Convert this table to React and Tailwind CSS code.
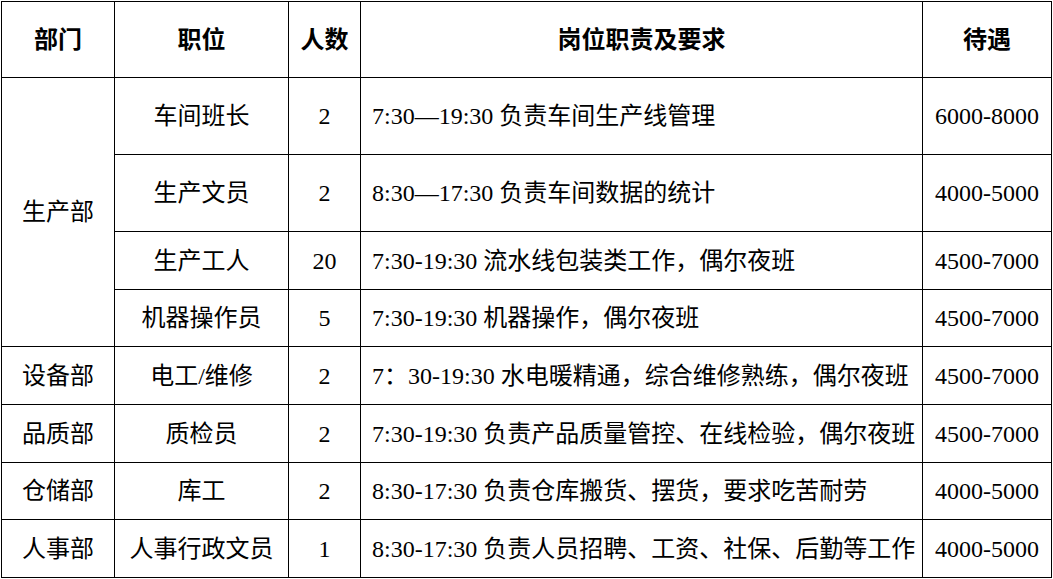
const ROWS = [
    { dept: "生产部", span: 4, job: "车间班长", num: "2", desc: "7:30—19:30 负责车间生产线管理", pay: "6000-8000", h: "h-[77px]" },
    { job: "生产文员", num: "2", desc: "8:30—17:30 负责车间数据的统计", pay: "4000-5000", h: "h-[77px]" },
    { job: "生产工人", num: "20", desc: "7:30-19:30 流水线包装类工作，偶尔夜班", pay: "4500-7000", h: "h-[58px]" },
    { job: "机器操作员", num: "5", desc: "7:30-19:30 机器操作，偶尔夜班", pay: "4500-7000", h: "h-[57px]" },
    { dept: "设备部", span: 1, job: "电工/维修", num: "2", desc: "7：30-19:30 水电暖精通，综合维修熟练，偶尔夜班", pay: "4500-7000", h: "h-[58px]" },
    { dept: "品质部", span: 1, job: "质检员", num: "2", desc: "7:30-19:30 负责产品质量管控、在线检验，偶尔夜班", pay: "4500-7000", h: "h-[58px]" },
    { dept: "仓储部", span: 1, job: "库工", num: "2", desc: "8:30-17:30 负责仓库搬货、摆货，要求吃苦耐劳", pay: "4000-5000", h: "h-[57px]" },
    { dept: "人事部", span: 1, job: "人事行政文员", num: "1", desc: "8:30-17:30 负责人员招聘、工资、社保、后勤等工作", pay: "4000-5000", h: "h-[58px]" },
];

const CELL = "border border-black p-0 align-middle";

export default function App() {
    return (
        <div className="bg-white pl-px pt-px w-[1053px] h-[579px] overflow-hidden">
            <table
                className="table-fixed border-collapse text-black text-[24px] leading-none w-[1050px]"
                style={{ fontFamily: '"Liberation Serif", "Noto Sans CJK SC", serif' }}
            >
                <colgroup>
                    <col className="w-[113px]" />
                    <col className="w-[174px]" />
                    <col className="w-[72px]" />
                    <col className="w-[562px]" />
                    <col className="w-[129px]" />
                </colgroup>
                <thead>
                    <tr className="h-[76px] font-bold">
                        <th className={`${CELL} text-center`}>部门</th>
                        <th className={`${CELL} text-center`}>职位</th>
                        <th className={`${CELL} text-center`}>人数</th>
                        <th className={`${CELL} text-center`}>岗位职责及要求</th>
                        <th className={`${CELL} text-center`}>待遇</th>
                    </tr>
                </thead>
                <tbody>
                    {ROWS.map((row) => (
                        <tr key={row.job} className={row.h}>
                            {row.dept && (
                                <td rowSpan={row.span} className={`${CELL} text-center`}>
                                    {row.dept}
                                </td>
                            )}
                            <td className={`${CELL} text-center`}>{row.job}</td>
                            <td className={`${CELL} text-center`}>{row.num}</td>
                            <td className={`${CELL} pl-[11px] whitespace-nowrap`}>{row.desc}</td>
                            <td className={`${CELL} text-center`}>{row.pay}</td>
                        </tr>
                    ))}
                </tbody>
            </table>
        </div>
    );
}
